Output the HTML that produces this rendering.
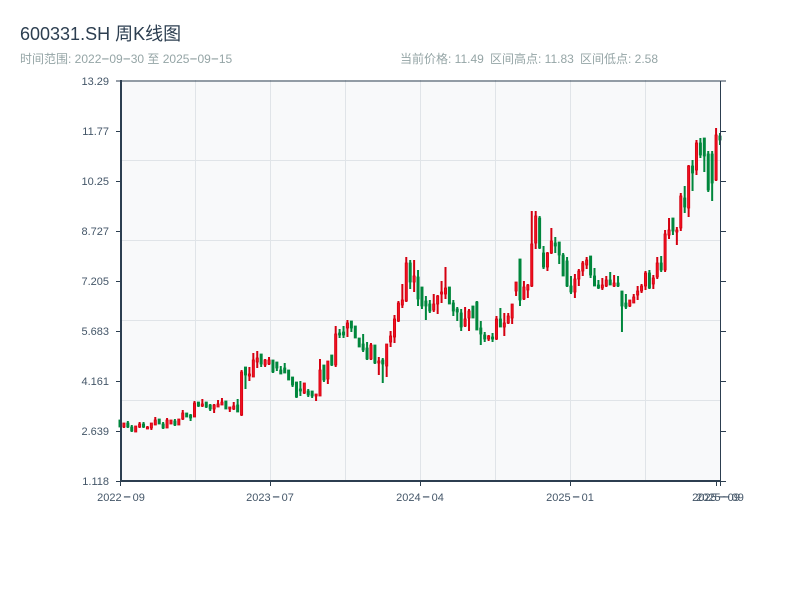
<!DOCTYPE html>
<html><head><meta charset="utf-8">
<style>
html,body{margin:0;padding:0;background:#fff;width:800px;height:600px;overflow:hidden}
svg{display:block;font-family:"WenQuanYi Zen Hei","Liberation Sans","Noto Sans CJK SC",sans-serif}
.g{stroke:#e0e4e8;stroke-width:1}
.a{stroke:#2c3e50;fill:none}
.yl{font-size:11px;fill:#445668;text-anchor:end}
.xl{font-size:11px;fill:#445668;text-anchor:middle}
.s{font-size:12px;fill:#95a5a6}
.h{font-size:16px;font-family:"IPAGothic","Liberation Sans",sans-serif;font-weight:normal}
</style></head><body>
<svg id="c" width="800" height="600" viewBox="0 0 800 600" xmlns="http://www.w3.org/2000/svg">
<rect x="120" y="80" width="600" height="400" fill="#f8f9fa"/>
<text x="20" y="40" font-size="18" fill="#2c3e50">600331.SH 周K线图</text>
<text x="20" y="63" class="s">时间范围: 2022<tspan class="h" dy="2">-</tspan><tspan dy="-2">09</tspan><tspan class="h" dy="2">-</tspan><tspan dy="-2">30 至 2025</tspan><tspan class="h" dy="2">-</tspan><tspan dy="-2">09</tspan><tspan class="h" dy="2">-</tspan><tspan dy="-2">15</tspan></text>
<text x="400" y="63" class="s">当前价格: 11.49</text>
<text x="490" y="63" class="s">区间高点: 11.83</text>
<text x="580" y="63" class="s">区间低点: 2.58</text>
<path class="g" d="M195.5 80V480M270.5 80V480M345.5 80V480M420.5 80V480M495.5 80V480M570.5 80V480M645.5 80V480M120 160.5H720M120 240.5H720M120 320.5H720M120 400.5H720"/>
<g id="k"></g>
<path class="a" stroke-width="2" d="M121 80V481M120 481H720"/>
<path class="a" d="M116 81H726M720.5 81V481M116 131.500H121M116 181.500H121M116 231.500H121M116 281.500H121M116 331.500H121M116 381.500H121M116 431.500H121M116 481.500H121M720 131.500H726M720 181.500H726M720 231.500H726M720 281.500H726M720 331.500H726M720 381.500H726M720 431.500H726M720 481.500H726M120.500 481V486M270.500 481V486M420.500 481V486M570.500 481V486M716.500 481V486M720.500 481V486"/>
<text x="109" y="85" class="yl">13.29</text>
<text x="109" y="135" class="yl">11.77</text>
<text x="109" y="185" class="yl">10.25</text>
<text x="109" y="235" class="yl">8.727</text>
<text x="109" y="285" class="yl">7.205</text>
<text x="109" y="335" class="yl">5.683</text>
<text x="109" y="385" class="yl">4.161</text>
<text x="109" y="435" class="yl">2.639</text>
<text x="109" y="485" class="yl">1.118</text>
<text x="121" y="501" class="xl">2022<tspan class="h" dx="1.500" dy="2">-</tspan><tspan dx="1.500" dy="-2">09</tspan></text>
<text x="270" y="501" class="xl">2023<tspan class="h" dx="1.500" dy="2">-</tspan><tspan dx="1.500" dy="-2">07</tspan></text>
<text x="420" y="501" class="xl">2024<tspan class="h" dx="1.500" dy="2">-</tspan><tspan dx="1.500" dy="-2">04</tspan></text>
<text x="570" y="501" class="xl">2025<tspan class="h" dx="1.500" dy="2">-</tspan><tspan dx="1.500" dy="-2">01</tspan></text>
<text x="716" y="501" class="xl">2025<tspan class="h" dx="1.500" dy="2">-</tspan><tspan dx="1.500" dy="-2">09</tspan></text>
<text x="720" y="501" class="xl">2025<tspan class="h" dx="1.500" dy="2">-</tspan><tspan dx="1.500" dy="-2">09</tspan></text>
</svg>
<script>
var d="G420 427 420 427,R423 428 423 427,G421 428 423 427,G425 432 427 431,R426 432 426 432,R422 428 424 427,G422 428 424 427,R426 429 427 429,R423 430 423 428,R417 425 420 425,G419 424 419 424,G422 429 424 428,R418 428 420 428,R420 424 420 424,G419 426 421 425,R419 425 419 425,R410 420 413 419,G413 417 413 417,G414 421 415 418,R401 417 403 417,G402 407 402 406,R399 407 404 406,G402 408 402 407,G404 411 405 409,R404 413 405 409,R400 407 404 407,R398 405 402 405,G401 409 401 409,R407 412 407 409,R402 410 406 409,G399 412 405 412,R370 416 372 415,G367 389 367 375,R367 381 374 376,R353 377 360 377,R351 368 358 362,G354 367 354 364,R359 367 360 365,R357 365 360 364,G360 373 360 372,G362 371 362 368,G366 374 370 374,G363 373 368 373,G370 380 370 380,G377 387 377 385,G382 398 382 397,G381 396 389 391,R383 394 383 393,G389 397 391 395,G391 398 391 396,R394 401 394 396,R359 396 370 396,G365 382 365 380,R361 384 361 379,G355 366 355 365,R326 367 334 365,G329 338 333 335,G326 338 332 335,R320 337 323 328,G321 332 321 328,G326 338 326 338,G338 347 338 347,G334 352 344 350,G342 360 348 359,R343 360 345 359,G345 364 345 363,R357 375 361 363,G358 383 360 364,R344 377 344 366,R331 347 336 342,R315 343 319 337,R301 322 303 321,R284 308 300 305,R257 302 263 301,G260 289 263 282,R260 292 276 282,G270 306 277 299,G287 309 287 306,G296 320 301 306,G300 313 304 311,R294 312 304 310,R295 314 296 304,R281 303 292 294,R267 299 288 294,G287 304 287 304,G300 316 303 311,G307 321 309 312,G309 331 313 327,R307 327 319 326,R309 331 311 318,G306 318 306 318,G301 330 302 330,G321 345 328 334,G332 342 335 339,R335 341 336 339,G333 342 337 339,R316 340 319 339,G308 327 319 327,R313 336 323 327,R313 324 316 323,R304 324 304 318,R282 296 282 291,G259 306 259 300,R281 300 287 299,R284 298 285 290,R211 287 244 286,R211 249 216 243,G216 249 218 248,G246 269 253 267,R252 271 253 267,R228 254 241 253,G237 253 243 246,G242 264 242 255,G253 276 255 276,G257 287 261 286,G276 294 286 292,R274 298 279 292,R269 286 271 279,R261 276 263 271,R257 269 260 265,G256 278 256 275,G268 286 276 286,G280 289 285 288,R278 290 285 288,R276 287 280 286,G272 285 280 285,R275 287 283 286,G276 287 283 286,G291 332 291 306,G294 309 303 307,R300 307 300 306,R294 303 297 303,R286 300 291 295,R284 293 286 291,R271 290 273 286,G270 289 273 288,R275 289 278 284,R257 279 263 277,G256 272 263 270,R230 272 234 270,R218 239 230 235,G218 235 218 231,R227 245 230 232,R193 231 196 228,G186 213 198 207,R165 217 166 208,G160 191 166 173,R140 175 143 170,G138 158 143 155,G138 172 138 156,G151 192 154 190,G151 201 154 183,R128 181 135 180,G133 145 136 140".split(",");
var h="",st=600/(d.length-1);
d.forEach(function(s,i){
 var r=s[0]=="R",p=s.slice(1).split(" ").map(Number),x=120+st*i,
 c=r?"#d40010":"#00873c",f=r?"#f01020":"#00873c";
 h+='<path d="M'+x.toFixed(2)+' '+p[0]+'V'+p[1]+'" stroke="'+c+'" stroke-width="2" fill="none"/>';
 h+='<rect x="'+(x-1.1).toFixed(2)+'" y="'+p[2]+'" width="2.2" height="'+Math.max(p[3]-p[2],1)+'" fill="'+f+'" stroke="'+c+'" stroke-width="0.8"/>';
});
document.getElementById("k").innerHTML=h;
</script>
</body></html>
